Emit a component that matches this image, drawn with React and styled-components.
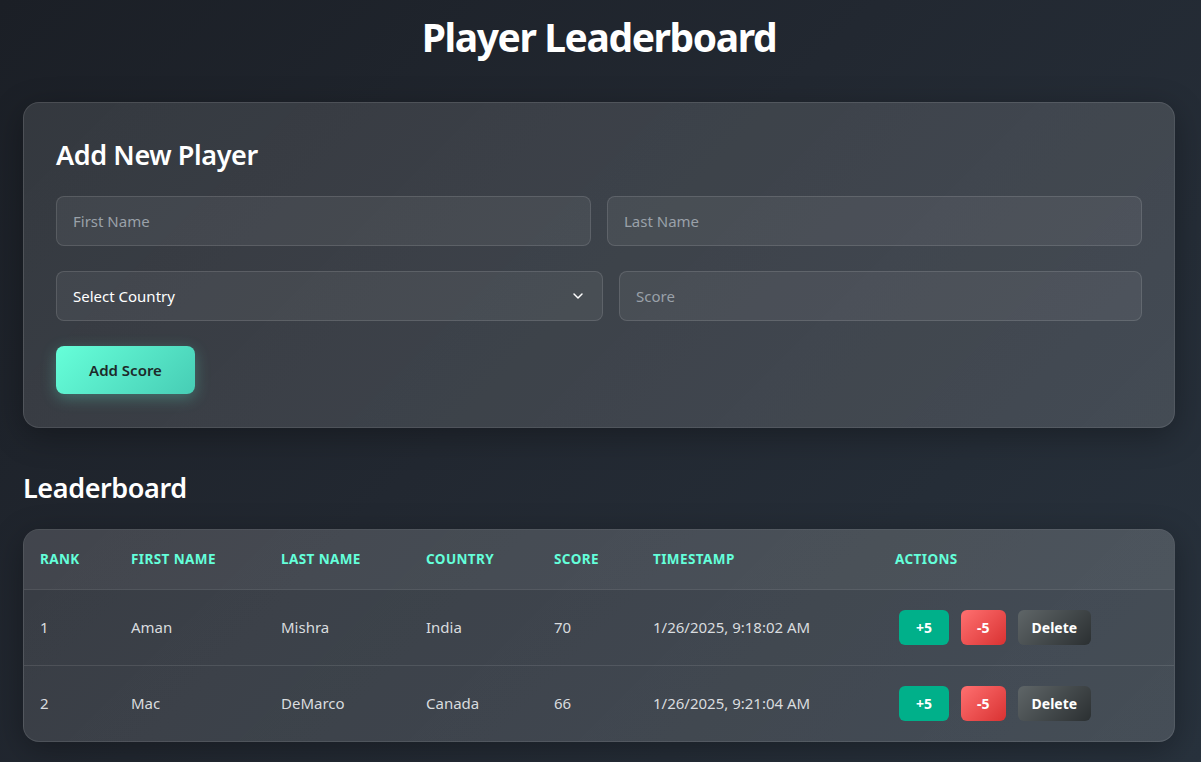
import React, { useState } from 'react';
import styled, { createGlobalStyle } from 'styled-components';
import { ChevronDown } from 'lucide-react';

const GlobalStyle = createGlobalStyle`
	* { box-sizing: border-box; }
	html, body { margin: 0; padding: 0; }
	body {
		min-height: 100vh;
		font-family: 'Noto Sans', 'Open Sans', sans-serif;
		color: #fff;
		background: linear-gradient(135deg, #1b1f26 0%, #222831 45%, #28323d 100%);
		background-attachment: fixed;
	}
`;

const Page = styled.div`
	width: 1152px;
	margin: 0 0 0 23px;
	padding: 13px 0 20px;
`;

const Title = styled.h1`
	margin: 0 0 41px;
	font-size: 39px;
	line-height: 48px;
	font-weight: 700;
	text-align: center;
	letter-spacing: -1.4px;
`;

const Card = styled.div`
	background: linear-gradient(135deg, rgba(255, 255, 255, 0.11) 0%, rgba(255, 255, 255, 0.14) 100%);
	border: 1px solid rgba(255, 255, 255, 0.1);
	border-radius: 16px;
	box-shadow: 0 8px 32px rgba(0, 0, 0, 0.3);
	padding: ${(p) => (p.$flush ? '0' : '32px 32px 33px')};
	overflow: hidden;
`;

const Heading = styled.h2`
	margin: ${(p) => (p.$outer ? '40px 0 21px' : '0 0 21px')};
	font-size: 27px;
	line-height: 40px;
	font-weight: 600;
	letter-spacing: -0.4px;
`;

const Form = styled.div`
	display: flex;
	flex-direction: column;
	gap: 25px;
`;

const Row = styled.div`
	display: flex;
	gap: 16px;
`;

const Field = styled.div`
	position: relative;
	flex: ${(p) => p.$grow || 1};
	display: flex;
`;

const Input = styled.input`
	width: 100%;
	height: 50px;
	padding: 0 16px;
	border-radius: 8px;
	border: 1px solid rgba(255, 255, 255, 0.12);
	background: rgba(255, 255, 255, 0.06);
	color: #fff;
	font-family: inherit;
	font-size: 15px;
	outline: none;
	&::placeholder { color: #9aa1a9; }
`;

const Select = styled.select`
	width: 100%;
	height: 50px;
	padding: 0 16px;
	border-radius: 8px;
	border: 1px solid rgba(255, 255, 255, 0.12);
	background: rgba(255, 255, 255, 0.06);
	color: #fff;
	font-family: inherit;
	font-size: 15px;
	appearance: none;
	outline: none;
`;

const Chevron = styled(ChevronDown)`
	position: absolute;
	right: 17px;
	top: 50%;
	transform: translateY(-50%);
	pointer-events: none;
	color: #fff;
`;

const AddButton = styled.button`
	align-self: flex-start;
	width: 139px;
	height: 48px;
	border: none;
	border-radius: 8px;
	background: linear-gradient(135deg, #66ffd9 0%, #47cdb5 100%);
	color: #1d2a2a;
	font-family: inherit;
	font-size: 15px;
	font-weight: 600;
	box-shadow: 0 4px 15px rgba(100, 255, 218, 0.28);
	cursor: pointer;
`;

const Table = styled.table`
	width: 100%;
	border-collapse: collapse;
	table-layout: fixed;
`;

const Th = styled.th`
	width: ${(p) => (p.$w ? `${p.$w}px` : 'auto')};
	height: 59px;
	padding: 0 16px;
	text-align: left;
	font-size: 13.5px;
	font-weight: 700;
	letter-spacing: 0.4px;
	text-transform: uppercase;
	color: #64ffda;
	background: rgba(255, 255, 255, 0.05);
	border-bottom: 1px solid rgba(255, 255, 255, 0.12);
`;

const Tr = styled.tr`
	& + & td { border-top: 1px solid rgba(255, 255, 255, 0.1); }
`;

const Td = styled.td`
	height: 76px;
	padding: 0 16px;
	font-size: 15px;
	color: #d9dcdf;
	white-space: nowrap;
`;

const Actions = styled.div`
	display: flex;
	gap: 12px;
	padding-left: 4px;
`;

const variants = {
	plus: 'background: #00b08a; padding: 0 17px;',
	minus: 'background: linear-gradient(135deg, #ff7070 0%, #d93232 100%); padding: 0 16px;',
	del: 'background: linear-gradient(135deg, #5f6668 0%, #2b3032 100%); padding: 0 14px;',
};

const ActionButton = styled.button`
	height: 35px;
	border: none;
	border-radius: 6px;
	color: #fff;
	font-family: inherit;
	font-size: 14px;
	font-weight: 700;
	cursor: pointer;
	${(p) => variants[p.$v]}
`;

const columns = [
	{ label: 'Rank', w: 91 },
	{ label: 'First Name', w: 150 },
	{ label: 'Last Name', w: 145 },
	{ label: 'Country', w: 128 },
	{ label: 'Score', w: 99 },
	{ label: 'Timestamp', w: 242 },
	{ label: 'Actions' },
];

const initial = [
	{ first: 'Aman', last: 'Mishra', country: 'India', score: 70, time: '1/26/2025, 9:18:02 AM' },
	{ first: 'Mac', last: 'DeMarco', country: 'Canada', score: 66, time: '1/26/2025, 9:21:04 AM' },
];

export default function App() {
	const [players, setPlayers] = useState(initial);

	const bump = (idx, n) =>
		setPlayers(players.map((p, i) => (i === idx ? { ...p, score: p.score + n } : p)));

	return (
		<>
			<GlobalStyle />
			<Page>
				<Title>Player Leaderboard</Title>

				<Card>
					<Heading>Add New Player</Heading>
					<Form>
						<Row>
							<Field>
								<Input placeholder='First Name' />
							</Field>
							<Field>
								<Input placeholder='Last Name' />
							</Field>
						</Row>
						<Row>
							<Field $grow={547}>
								<Select defaultValue=''>
									<option value=''>Select Country</option>
									<option>India</option>
									<option>Canada</option>
								</Select>
								<Chevron size={16} strokeWidth={2.2} />
							</Field>
							<Field $grow={523}>
								<Input placeholder='Score' />
							</Field>
						</Row>
						<AddButton>Add Score</AddButton>
					</Form>
				</Card>

				<Heading $outer>Leaderboard</Heading>
				<Card $flush>
					<Table>
						<thead>
							<tr>
								{columns.map((c) => (
									<Th key={c.label} $w={c.w}>
										{c.label}
									</Th>
								))}
							</tr>
						</thead>
						<tbody>
							{players.map((p, idx) => (
								<Tr key={idx}>
									<Td>{idx + 1}</Td>
									<Td>{p.first}</Td>
									<Td>{p.last}</Td>
									<Td>{p.country}</Td>
									<Td>{p.score}</Td>
									<Td>{p.time}</Td>
									<Td>
										<Actions>
											<ActionButton $v='plus' onClick={() => bump(idx, 5)}>
												+5
											</ActionButton>
											<ActionButton $v='minus' onClick={() => bump(idx, -5)}>
												-5
											</ActionButton>
											<ActionButton $v='del' onClick={() => setPlayers(players.filter((_, i) => i !== idx))}>
												Delete
											</ActionButton>
										</Actions>
									</Td>
								</Tr>
							))}
						</tbody>
					</Table>
				</Card>
			</Page>
		</>
	);
}
